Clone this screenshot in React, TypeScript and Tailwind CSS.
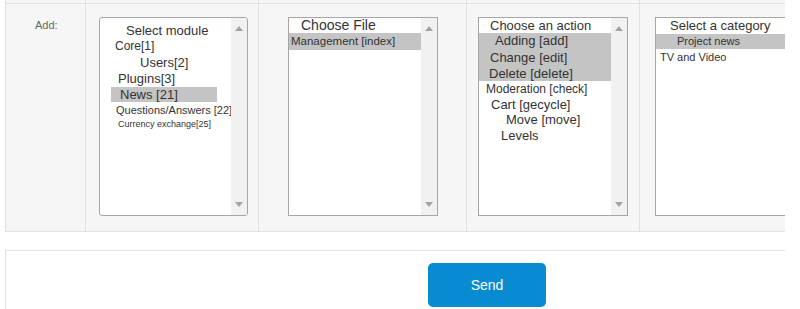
import React from 'react';

// Одна строка списка: высота, отступ и размер шрифта задаются классами
const Opt: React.FC<{ className?: string; children: React.ReactNode }> = ({ className = '', children }) => (
  <div className={`flex items-center whitespace-nowrap overflow-hidden ${className}`}>{children}</div>
);

// Полоса прокрутки справа у списка
const Scrollbar: React.FC = () => (
  <div className="w-[16px] h-full bg-[#f1f1f1] flex flex-col items-center justify-between py-[8px]">
    <svg width="8" height="5" viewBox="0 0 8 5">
      <polygon points="0,5 4,0 8,5" fill="#a3a3a3" />
    </svg>
    <svg width="8" height="5" viewBox="0 0 8 5">
      <polygon points="0,0 8,0 4,5" fill="#a3a3a3" />
    </svg>
  </div>
);

interface ListBoxProps {
  className?: string;
  scroll?: boolean;
  children: React.ReactNode;
}

const ListBox: React.FC<ListBoxProps> = ({ className = '', scroll = true, children }) => (
  <div className={`w-[149px] h-[199px] shrink-0 border border-[#a6a6a6] rounded-[3px] bg-white flex overflow-hidden ${className}`}>
    <div className="flex-1 min-w-0 text-[#333]">{children}</div>
    {scroll && <Scrollbar />}
  </div>
);

const App: React.FC = () => {
  return (
    <div className="w-[800px] h-[309px] bg-white overflow-hidden font-['Liberation_Sans',Arial,sans-serif]">
      <div className="ml-[5px] w-[780px] overflow-hidden">
        {/* Хвост предыдущей строки таблицы */}
        <div className="flex w-[820px] h-[4px] border-b border-[#e1e1e1] bg-[#f6f6f6]">
          <div className="w-[80px] border-l border-[#e1e1e1]" />
          <div className="w-[173px] border-l border-[#e1e1e1]" />
          <div className="w-[208px] border-l border-[#e1e1e1]" />
          <div className="w-[173px] border-l border-[#e1e1e1]" />
          <div className="w-[173px] border-l border-[#e1e1e1]" />
        </div>

        {/* Основная строка */}
        <div className="flex w-[820px] h-[228px] border-b border-[#e1e1e1] bg-[#f6f6f6]">
          <div className="w-[80px] border-l border-[#e1e1e1] pt-[14px] pl-[29px] text-[11px] leading-[14px] text-[#666]">
            Add:
          </div>

          {/* Модуль */}
          <div className="w-[173px] border-l border-[#e1e1e1] pt-[13px] pl-[13px]">
            <ListBox>
              <div className="pt-[6px]">
                <Opt className="h-[14px] pl-[26px] text-[13px]">Select module</Opt>
                <Opt className="h-[16px] pl-[15px] text-[12px]">Core[1]</Opt>
                <Opt className="h-[17px] pl-[40px] text-[13px]">Users[2]</Opt>
                <Opt className="h-[16px] pl-[18px] text-[13px]">Plugins[3]</Opt>
                <div className="h-[16px]">
                  <div className="ml-[11px] w-[106px] h-[15px] bg-[#c4c4c4] flex items-center pl-[9px] text-[13px]">News [21]</div>
                </div>
                <Opt className="h-[15px] pl-[16px] text-[11px]">Questions/Answers [22]</Opt>
                <Opt className="h-[14px] pl-[18px] text-[9px]">Currency exchange[25]</Opt>
              </div>
            </ListBox>
          </div>

          {/* Файл */}
          <div className="w-[208px] border-l border-[#e1e1e1] pt-[13px] pl-[29px]">
            <ListBox className="rounded-none w-[150px]">
              <Opt className="h-[15px] pl-[12px] text-[14px]">Choose File</Opt>
              <Opt className="h-[17px] pl-[2px] text-[11.5px] bg-[#c4c4c4]">Management [index]</Opt>
            </ListBox>
          </div>

          {/* Действие */}
          <div className="w-[173px] border-l border-[#e1e1e1] pt-[13px] pl-[11px]">
            <ListBox className="rounded-none w-[150px]">
              <Opt className="h-[15px] pl-[11px] text-[13px]">Choose an action</Opt>
              <div className="bg-[#c4c4c4]">
                <Opt className="h-[16px] pl-[16px] text-[13px]">Adding [add]</Opt>
                <Opt className="h-[17px] pl-[11px] text-[13px]">Change [edit]</Opt>
                <Opt className="h-[15px] pl-[10px] text-[13px]">Delete [delete]</Opt>
              </div>
              <Opt className="h-[16px] pl-[7px] text-[12px]">Moderation [check]</Opt>
              <Opt className="h-[16px] pl-[12px] text-[13px]">Cart [gecycle]</Opt>
              <Opt className="h-[14px] pl-[27px] text-[13px]">Move [move]</Opt>
              <Opt className="h-[18px] pl-[22px] text-[13px]">Levels</Opt>
            </ListBox>
          </div>

          {/* Категория */}
          <div className="w-[173px] border-l border-[#e1e1e1] pt-[13px] pl-[15px]">
            <ListBox className="rounded-none w-[150px]" scroll={false}>
              <Opt className="h-[16px] pl-[14px] text-[13px]">Select a category</Opt>
              <Opt className="h-[15px] pl-[21px] text-[11px] bg-[#c4c4c4]">Project news</Opt>
              <Opt className="h-[16px] pl-[4px] text-[11px]">TV and Video</Opt>
            </ListBox>
          </div>
        </div>

        {/* Панель с кнопкой */}
        <div className="mt-[18px] h-[80px] border-t border-l border-[#e1e1e1] bg-white pt-[12px] pl-[422px]">
          <button className="w-[118px] h-[44px] rounded-[5px] bg-[#088bd0] text-white text-[14px] flex items-center justify-center">
            Send
          </button>
        </div>
      </div>
    </div>
  );
};

export default App;
